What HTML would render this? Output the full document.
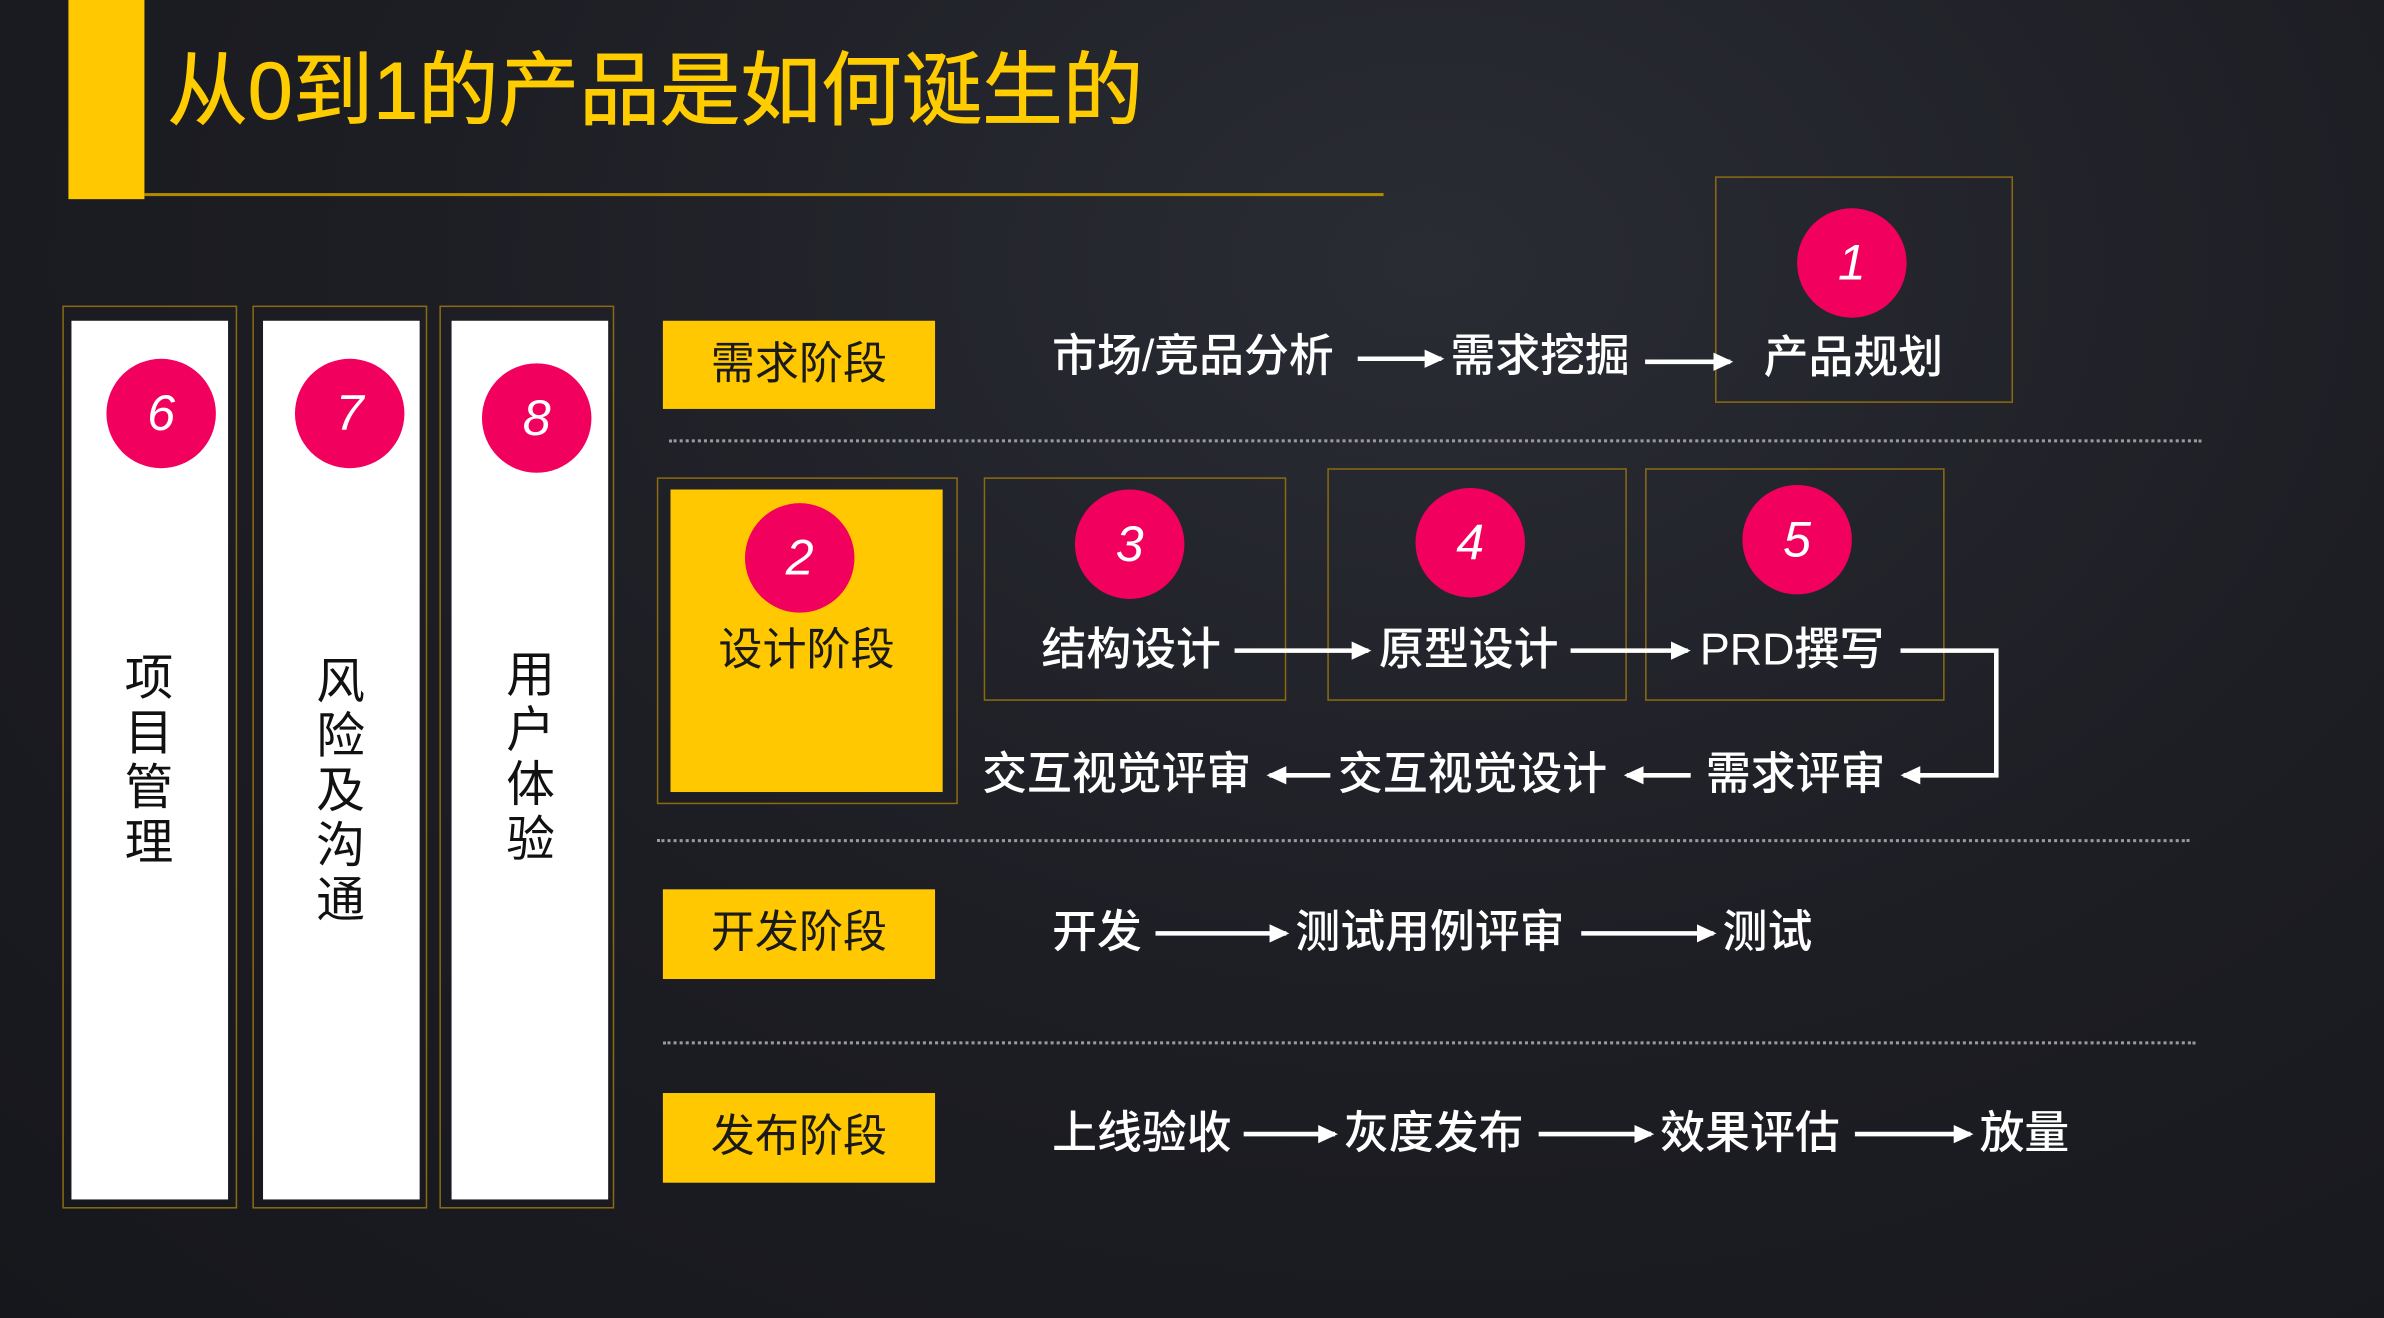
<!DOCTYPE html>
<html><head><meta charset="utf-8"><style>
html,body{margin:0;padding:0;width:2384px;height:1318px;overflow:hidden;background:#1c1d23;}
#s{position:absolute;left:0;top:0;width:1568px;height:867px;transform:scale(1.52041,1.5202);transform-origin:0 0;
background:radial-gradient(ellipse at 60% 20%,#2a2c34 0%,#1d1e24 50%,#16171c 100%);
font-family:"Liberation Sans","Noto Sans CJK SC",sans-serif;}
.a{position:absolute;}
.gb{position:absolute;border:1px solid #8a6a10;box-sizing:border-box;}
.w{position:absolute;background:#fff;}
.c{position:absolute;width:72px;height:72px;border-radius:50%;background:#f2005e;color:#fff;font-size:33px;font-style:italic;text-align:center;line-height:72px;font-weight:500;}
.v{position:absolute;color:#111;font-size:32px;line-height:36px;width:40px;text-align:center;}
.y{position:absolute;background:#ffc800;color:#1a1a1a;font-size:29px;text-align:center;}
.t{position:absolute;color:#fff;font-size:29.5px;white-space:nowrap;line-height:34px;font-weight:500;}
.d{position:absolute;height:0;border-top:2px dotted #9a9a9a;}
</style></head><body><div id="s">
<div class="a" style="left:45px;top:0;width:50px;height:131px;background:#ffc800"></div>
<div class="a" style="left:95px;top:127px;width:815px;height:2px;background:#b08a00"></div>
<div class="a" style="left:110px;top:28px;font-size:53px;color:#ffcc00;white-space:nowrap;line-height:66px;-webkit-text-stroke:0.6px #ffcc00">从0到1的产品是如何诞生的</div>

<div class="gb" style="left:41px;top:201px;width:115px;height:594px"></div>
<div class="w" style="left:47px;top:211px;width:103px;height:578px"></div>
<div class="gb" style="left:166px;top:201px;width:115px;height:594px"></div>
<div class="w" style="left:173px;top:211px;width:103px;height:578px"></div>
<div class="gb" style="left:289px;top:201px;width:115px;height:594px"></div>
<div class="w" style="left:297px;top:211px;width:103px;height:578px"></div>
<div class="c" style="left:70px;top:236px">6</div>
<div class="c" style="left:194px;top:236px">7</div>
<div class="c" style="left:317px;top:239px">8</div>
<div class="v" style="left:78px;top:428px">项目管理</div>
<div class="v" style="left:204px;top:430px">风险及沟通</div>
<div class="v" style="left:329px;top:426px">用户体验</div>

<div class="y" style="left:436px;top:211px;width:179px;height:58px;line-height:58px">需求阶段</div>
<div class="y" style="left:436px;top:585px;width:179px;height:59px;line-height:59px">开发阶段</div>
<div class="y" style="left:436px;top:719px;width:179px;height:59px;line-height:59px">发布阶段</div>

<div class="d" style="left:440px;top:289px;width:1008px"></div>
<div class="d" style="left:432px;top:552px;width:1008px"></div>
<div class="d" style="left:436px;top:685px;width:1008px"></div>

<div class="t" style="left:692px;top:218px">市场/竞品分析</div>
<div class="t" style="left:954px;top:218px">需求挖掘</div>
<div class="gb" style="left:1128px;top:116px;width:196px;height:149px"></div>
<div class="c" style="left:1182px;top:137px">1</div>
<div class="t" style="left:1160px;top:219px">产品规划</div>

<div class="gb" style="left:432px;top:314px;width:198px;height:215px"></div>
<div class="a" style="left:441px;top:322px;width:179px;height:199px;background:#ffc800"></div>
<div class="c" style="left:490px;top:331px">2</div>
<div class="a" style="left:441px;top:404px;width:179px;text-align:center;color:#1a1a1a;font-size:29px">设计阶段</div>

<div class="gb" style="left:647px;top:314px;width:199px;height:147px"></div>
<div class="c" style="left:707px;top:322px">3</div>
<div class="t" style="left:685px;top:411px">结构设计</div>
<div class="gb" style="left:873px;top:308px;width:197px;height:153px"></div>
<div class="c" style="left:931px;top:321px">4</div>
<div class="t" style="left:907px;top:411px">原型设计</div>
<div class="gb" style="left:1082px;top:308px;width:197px;height:153px"></div>
<div class="c" style="left:1146px;top:319px">5</div>
<div class="t" style="left:1118px;top:411px">PRD撰写</div>

<div class="t" style="left:1122px;top:493px">需求评审</div>
<div class="t" style="left:880px;top:493px">交互视觉设计</div>
<div class="t" style="left:646px;top:493px">交互视觉评审</div>

<div class="t" style="left:692px;top:597px">开发</div>
<div class="t" style="left:852px;top:597px">测试用例评审</div>
<div class="t" style="left:1133px;top:597px">测试</div>

<div class="t" style="left:692px;top:729px">上线验收</div>
<div class="t" style="left:884px;top:729px">灰度发布</div>
<div class="t" style="left:1092px;top:729px">效果评估</div>
<div class="t" style="left:1302px;top:729px">放量</div>

<svg class="a" style="left:0;top:0" width="1568" height="867" viewBox="0 0 1568 867">
<defs><marker id="h" markerWidth="14" markerHeight="14" refX="11" refY="7" orient="auto" markerUnits="userSpaceOnUse"><path d="M0,1 L13,7 L0,13 Z" fill="#fff"/></marker></defs>
<g stroke="#fff" stroke-width="3" fill="none" marker-end="url(#h)">
<line x1="893" y1="236" x2="948" y2="236"/>
<line x1="1082" y1="238" x2="1138" y2="238"/>
<line x1="812" y1="428" x2="900" y2="428"/>
<line x1="1033" y1="428" x2="1110" y2="428"/>
<polyline points="1250,428 1313,428 1313,510 1252,510"/>
<line x1="1112" y1="510" x2="1070" y2="510"/>
<line x1="875" y1="510" x2="835" y2="510"/>
<line x1="760" y1="614" x2="846" y2="614"/>
<line x1="1040" y1="614" x2="1127" y2="614"/>
<line x1="818" y1="746" x2="878" y2="746"/>
<line x1="1012" y1="746" x2="1086" y2="746"/>
<line x1="1220" y1="746" x2="1296" y2="746"/>
</g></svg>
</div></body></html>
